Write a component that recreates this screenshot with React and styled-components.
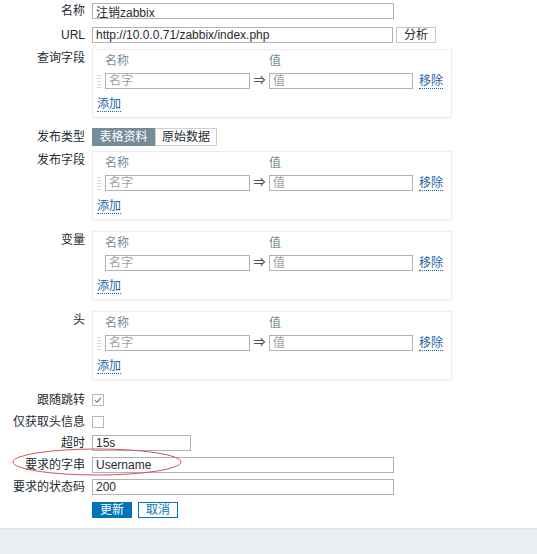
import React from 'react';
import styled, { createGlobalStyle } from 'styled-components';

const GlobalStyle = createGlobalStyle`
  body {
    margin: 0;
    background: #fff;
    font-family: "Liberation Sans", "Noto Sans CJK SC", sans-serif;
    font-size: 12px;
    color: #1f2c33;
  }
`;

const Page = styled.div`
  position: relative;
  height: 554px;
  display: flex;
  flex-direction: column;
  overflow: hidden;
`;

const Form = styled.div`
  flex: 1;
`;

const Row = styled.div`
  display: flex;
  align-items: ${p => (p.top ? 'flex-start' : 'center')};
  margin-top: ${p => p.mt}px;
`;

const Label = styled.div`
  width: 85px;
  margin-right: 7px;
  text-align: right;
  line-height: 16px;
  white-space: nowrap;
  padding-top: ${p => (p.top ? 1 : 0)}px;
`;

const TextInput = styled.input`
  box-sizing: border-box;
  width: ${p => p.w}px;
  height: 16px;
  margin: 0;
  padding: 0 3px;
  border: 1px solid #b2b2b2;
  font-family: inherit;
  font-size: 12px;
  color: #1f2c33;
  background: #fff;
  outline: none;
  &::placeholder {
    color: #a0a0a0;
  }
`;

const SmallButton = styled.button`
  box-sizing: border-box;
  width: 40px;
  height: 16px;
  margin-left: 3px;
  padding: 0;
  border: 1px solid #c6c6c6;
  background: #fff;
  font-family: inherit;
  font-size: 12px;
  color: #1f2c33;
  line-height: 14px;
`;

const Box = styled.div`
  box-sizing: border-box;
  width: 360px;
  height: 69px;
  padding: 3px 4px 5px 4px;
  border: 1px solid #ececec;
  box-shadow: 0 1px 1px rgba(0, 0, 0, 0.03);
  display: flex;
  flex-direction: column;
  gap: 4px;
`;

const Grid = styled.div`
  display: grid;
  grid-template-columns: 8px 145px 19px 144px auto;
  align-items: center;
  line-height: 16px;
`;

const HeadCell = styled.div`
  color: #768d99;
  grid-column: ${p => p.col};
`;

const Handle = styled.div`
  width: 4px;
  height: 15px;
  justify-self: start;
  visibility: ${p => (p.show ? 'visible' : 'hidden')};
  background-image: radial-gradient(circle, #d6d6d6 0.6px, transparent 0.8px);
  background-size: 2px 3px;
`;

const Arrow = styled.span`
  text-align: center;
  font-size: 12px;
  color: #1f2c33;
`;

const Link = styled.span`
  color: #1f65a6;
  border-bottom: 1px dotted #1f65a6;
  line-height: 14px;
  justify-self: start;
  margin-left: ${p => p.ml || 0}px;
`;

const AddRow = styled.div`
  margin-top: 3px;
  line-height: 16px;
`;

const Segmented = styled.div`
  display: flex;
  height: 18px;
`;

const Segment = styled.div`
  box-sizing: border-box;
  width: ${p => p.w}px;
  height: 18px;
  line-height: 16px;
  text-align: center;
  border: 1px solid ${p => (p.active ? '#768d99' : '#cfcfcf')};
  background: ${p => (p.active ? '#768d99' : '#fff')};
  color: ${p => (p.active ? '#fff' : '#1f2c33')};
`;

const Check = styled.span`
  box-sizing: border-box;
  width: 12px;
  height: 12px;
  border: 1px solid #b8b8b8;
  background: #fff;
  display: flex;
  align-items: center;
  justify-content: center;
`;

const ActionButton = styled.button`
  box-sizing: border-box;
  width: 40px;
  height: 16px;
  margin: 0 6px 0 0;
  padding: 0;
  border: 1px solid #0275b8;
  background: ${p => (p.primary ? '#0275b8' : '#fff')};
  color: ${p => (p.primary ? '#fff' : '#0275b8')};
  font-family: inherit;
  font-size: 12px;
  line-height: 14px;
`;

const Footer = styled.div`
  height: 25px;
  background: #ebeef0;
  border-top: 1px solid #e2e6e9;
`;

const Annotation = styled.svg`
  position: absolute;
  left: 11px;
  top: 446px;
  pointer-events: none;
`;

const PairBox = ({ sortable }) => (
  <Box>
    <Grid>
      <HeadCell col={2}>名称</HeadCell>
      <HeadCell col={4}>值</HeadCell>
    </Grid>
    <Grid>
      <Handle show={sortable} />
      <TextInput w={145} placeholder="名字" />
      <Arrow>⇒</Arrow>
      <TextInput w={144} placeholder="值" />
      <Link ml={6}>移除</Link>
    </Grid>
    <AddRow>
      <Link>添加</Link>
    </AddRow>
  </Box>
);

const CheckMark = () => (
  <svg width="8" height="8" viewBox="0 0 8 8">
    <path d="M1 4.2 L3.2 6.3 L7 1.6" fill="none" stroke="#4f7fa8" strokeWidth="1.1" />
  </svg>
);

export default function App() {
  return (
    <>
      <GlobalStyle />
      <Page>
        <Form>
          <Row mt={3}>
            <Label>名称</Label>
            <TextInput w={302} defaultValue="注销zabbix" />
          </Row>
          <Row mt={8}>
            <Label>URL</Label>
            <TextInput w={301} defaultValue="http://10.0.0.71/zabbix/index.php" />
            <SmallButton>分析</SmallButton>
          </Row>
          <Row mt={6} top>
            <Label top>查询字段</Label>
            <PairBox sortable />
          </Row>
          <Row mt={10}>
            <Label>发布类型</Label>
            <Segmented>
              <Segment w={63} active>表格资料</Segment>
              <Segment w={62}>原始数据</Segment>
            </Segmented>
          </Row>
          <Row mt={5} top>
            <Label top>发布字段</Label>
            <PairBox sortable />
          </Row>
          <Row mt={11} top>
            <Label top>变量</Label>
            <PairBox />
          </Row>
          <Row mt={11} top>
            <Label top>头</Label>
            <PairBox sortable />
          </Row>
          <Row mt={12}>
            <Label>跟随跳转</Label>
            <Check><CheckMark /></Check>
          </Row>
          <Row mt={6}>
            <Label>仅获取头信息</Label>
            <Check />
          </Row>
          <Row mt={5}>
            <Label>超时</Label>
            <TextInput w={99} defaultValue="15s" />
          </Row>
          <Row mt={6}>
            <Label>要求的字串</Label>
            <TextInput w={302} defaultValue="Username" />
          </Row>
          <Row mt={6}>
            <Label>要求的状态码</Label>
            <TextInput w={302} defaultValue="200" />
          </Row>
          <Row mt={7}>
            <Label />
            <ActionButton primary>更新</ActionButton>
            <ActionButton>取消</ActionButton>
          </Row>
        </Form>
        <Footer />
        <Annotation width="172" height="32" viewBox="0 0 172 32">
          <ellipse cx="86" cy="16" rx="84" ry="13" fill="none" stroke="#d2515c" strokeWidth="1" />
        </Annotation>
      </Page>
    </>
  );
}
